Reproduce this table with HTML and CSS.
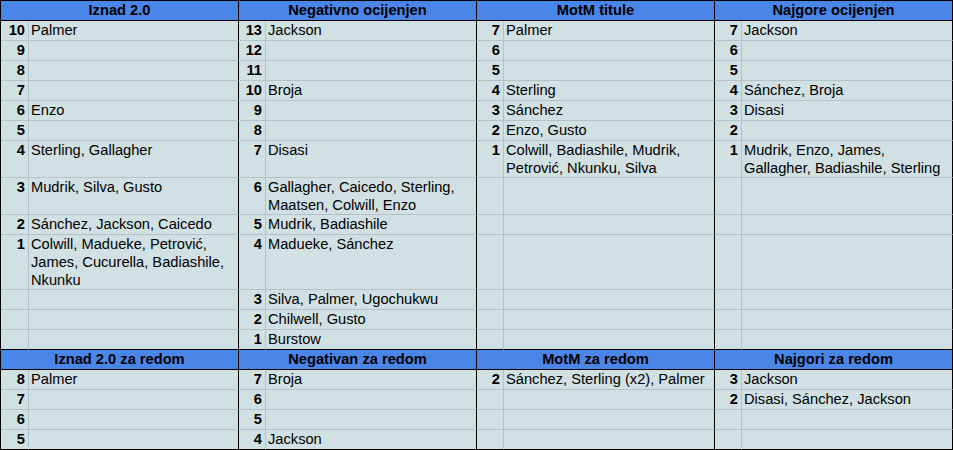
FILE: index.html
```html
<!DOCTYPE html>
<html>
<head>
<meta charset="utf-8">
<link rel="stylesheet" href="styles.css">
</head>
<body>
<div class="sheet">
  <div class="h">Iznad 2.0</div><div class="h">Negativno ocijenjen</div><div class="h">MotM titule</div><div class="h">Najgore ocijenjen</div>

  <div class="n">10</div><div class="t">Palmer</div><div class="n">13</div><div class="t">Jackson</div><div class="n">7</div><div class="t">Palmer</div><div class="n">7</div><div class="t">Jackson</div>
  <div class="n">9</div><div class="t"></div><div class="n">12</div><div class="t"></div><div class="n">6</div><div class="t"></div><div class="n">6</div><div class="t"></div>
  <div class="n">8</div><div class="t"></div><div class="n">11</div><div class="t"></div><div class="n">5</div><div class="t"></div><div class="n">5</div><div class="t"></div>
  <div class="n">7</div><div class="t"></div><div class="n">10</div><div class="t">Broja</div><div class="n">4</div><div class="t">Sterling</div><div class="n">4</div><div class="t">Sánchez, Broja</div>
  <div class="n">6</div><div class="t">Enzo</div><div class="n">9</div><div class="t"></div><div class="n">3</div><div class="t">Sánchez</div><div class="n">3</div><div class="t">Disasi</div>
  <div class="n">5</div><div class="t"></div><div class="n">8</div><div class="t"></div><div class="n">2</div><div class="t">Enzo, Gusto</div><div class="n">2</div><div class="t"></div>
  <div class="n">4</div><div class="t">Sterling, Gallagher</div><div class="n">7</div><div class="t">Disasi</div><div class="n">1</div><div class="t">Colwill, Badiashile, Mudrik, Petrović, Nkunku, Silva</div><div class="n">1</div><div class="t">Mudrik, Enzo, James, Gallagher, Badiashile, Sterling</div>
  <div class="n">3</div><div class="t">Mudrik, Silva, Gusto</div><div class="n">6</div><div class="t">Gallagher, Caicedo, Sterling, Maatsen, Colwill, Enzo</div><div class="n"></div><div class="t"></div><div class="n"></div><div class="t"></div>
  <div class="n">2</div><div class="t">Sánchez, Jackson, Caicedo</div><div class="n">5</div><div class="t">Mudrik, Badiashile</div><div class="n"></div><div class="t"></div><div class="n"></div><div class="t"></div>
  <div class="n">1</div><div class="t">Colwill, Madueke, Petrović, James, Cucurella, Badiashile, Nkunku</div><div class="n">4</div><div class="t">Madueke, Sánchez</div><div class="n"></div><div class="t"></div><div class="n"></div><div class="t"></div>
  <div class="n"></div><div class="t"></div><div class="n">3</div><div class="t">Silva, Palmer, Ugochukwu</div><div class="n"></div><div class="t"></div><div class="n"></div><div class="t"></div>
  <div class="n"></div><div class="t"></div><div class="n">2</div><div class="t">Chilwell, Gusto</div><div class="n"></div><div class="t"></div><div class="n"></div><div class="t"></div>
  <div class="n last"></div><div class="t last"></div><div class="n last">1</div><div class="t last">Burstow</div><div class="n last"></div><div class="t last"></div><div class="n last"></div><div class="t last"></div>

  <div class="h">Iznad 2.0 za redom</div><div class="h">Negativan za redom</div><div class="h">MotM za redom</div><div class="h">Najgori za redom</div>

  <div class="n">8</div><div class="t">Palmer</div><div class="n">7</div><div class="t">Broja</div><div class="n">2</div><div class="t">Sánchez, Sterling (x2), Palmer</div><div class="n">3</div><div class="t">Jackson</div>
  <div class="n">7</div><div class="t"></div><div class="n">6</div><div class="t"></div><div class="n"></div><div class="t"></div><div class="n">2</div><div class="t">Disasi, Sánchez, Jackson</div>
  <div class="n">6</div><div class="t"></div><div class="n">5</div><div class="t"></div><div class="n"></div><div class="t"></div><div class="n"></div><div class="t"></div>
  <div class="n last">5</div><div class="t last"></div><div class="n last">4</div><div class="t last">Jackson</div><div class="n last"></div><div class="t last"></div><div class="n last"></div><div class="t last"></div>
</div>
</body>
</html>
```
FILE: styles.css
```css
html, body {
  margin: 0;
  padding: 0;
  background: #ffffff;
}

.sheet {
  display: grid;
  grid-template-columns: 28px 210px 27px 211px 27px 211px 27px 211px;
  grid-template-rows: 20px 20px 20px 20px 20px 20px 20px 37px 37px 20px 55px 20px 20px 20px 20px 20px 20px 20px 20px;
  width: 953px;
  height: 450px;
  box-sizing: border-box;
  border-left: 1px solid #000;
  border-top: 1px solid #000;
  font-family: "Liberation Sans", Arial, sans-serif;
  font-size: 14.667px;
  line-height: 18px;
  color: #000;
  background: #d0e0e3;
}

.sheet > div {
  box-sizing: border-box;
  border-right: 1px solid #b4c2c6;
  border-bottom: 1px solid #b4c2c6;
  overflow: hidden;
}

.h {
  grid-column: span 2;
  background: #4a86e8;
  font-weight: bold;
  text-align: center;
  border-right-color: #000 !important;
  border-bottom-color: #000 !important;
}

.n {
  font-weight: bold;
  text-align: right;
  padding-right: 3px;
}

.t {
  padding-left: 2px;
  padding-right: 2px;
  border-right-color: #000 !important;
}

.sheet > .last {
  border-bottom-color: #000;
}
```
